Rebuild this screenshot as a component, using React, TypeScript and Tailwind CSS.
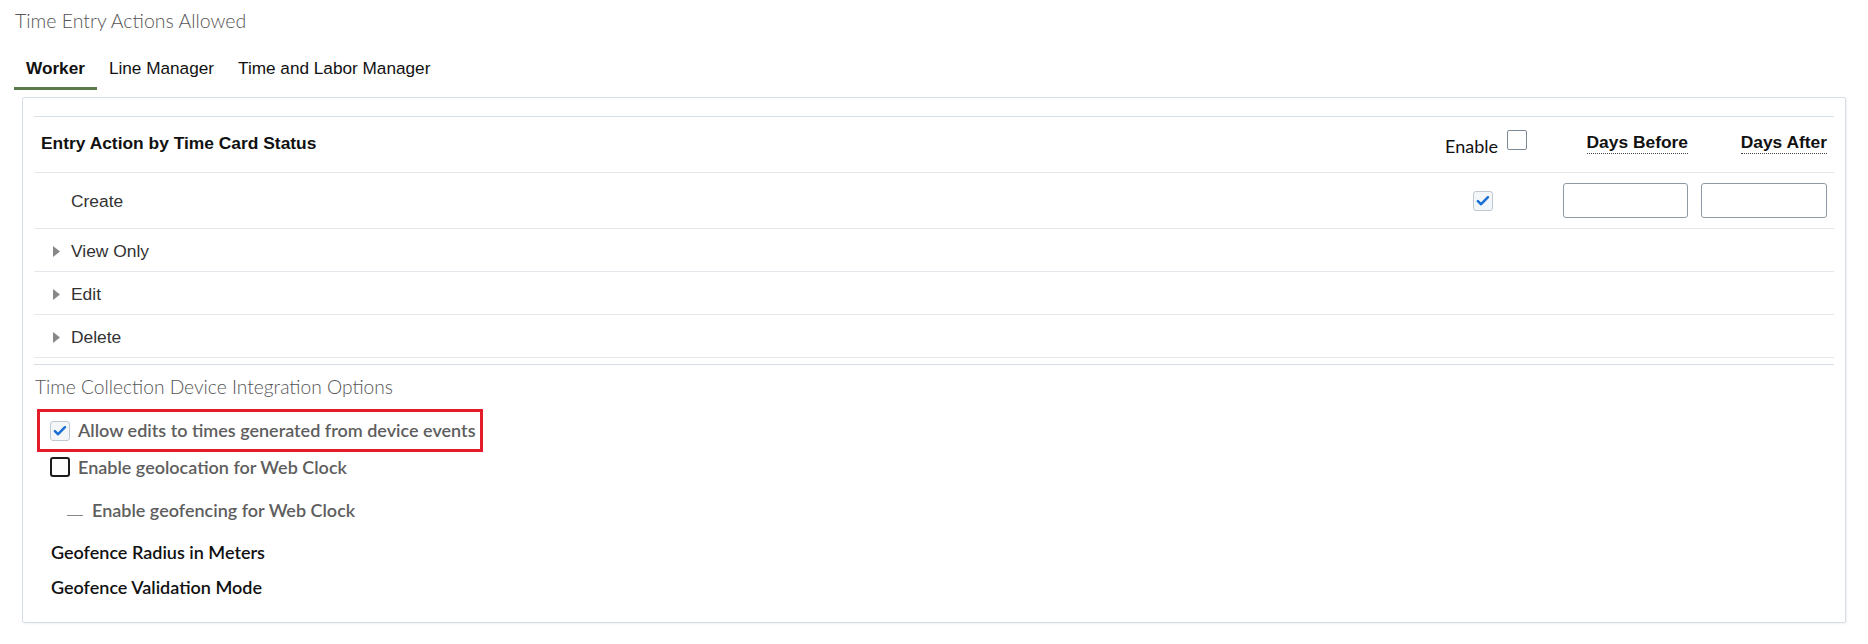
import React from 'react';

const CheckedBox: React.FC = () => (
  <span className="flex h-[20px] w-[20px] shrink-0 items-center justify-center rounded-[3px] border border-[#bfc8d1] bg-[#f4f7fa]">
    <svg viewBox="0 0 20 20" className="h-[20px] w-[20px]">
      <path d="M4.3 10.2l3.6 3.4 7.6-7.8" fill="none" stroke="#1a6fd2" strokeWidth="2.8" strokeLinecap="round" strokeLinejoin="round" />
    </svg>
  </span>
);

const Caret: React.FC = () => (
  <svg viewBox="0 0 7 11" className="h-[11px] w-[7px] shrink-0">
    <path d="M0 0 L7 5.5 L0 11 Z" fill="#888" />
  </svg>
);

const rows = ['View Only', 'Edit', 'Delete'];

export default function App() {
  return (
    <div className="h-[644px] w-[1868px] bg-white font-['Liberation_Sans',Arial,sans-serif] text-[#333]">
      {/* page title */}
      <div className="h-[44px] pl-[15px] pt-[7px] font-['Lato',sans-serif] text-[19.5px] font-light leading-[28px] text-[#555]">
        Time Entry Actions Allowed
      </div>

      {/* tabs */}
      <div className="flex h-[46px] pl-[14px] text-[17.2px] leading-[20px]">
        <div className="flex items-end border-b-[3px] border-[#5b7a4c] px-[12px] pb-[9px] font-bold text-[#111]">Worker</div>
        <div className="flex items-end px-[12px] pb-[12px] text-[#111]">Line Manager</div>
        <div className="flex items-end px-[12px] pb-[12px] text-[#111]">Time and Labor Manager</div>
      </div>

      {/* panel */}
      <div className="ml-[22px] mt-[7px] box-border h-[526px] w-[1824px] rounded-[2px] border border-[#d6dde4] px-[11px] pt-[18px] shadow-[1px_1px_2px_rgba(0,0,0,0.06)]">
        <div className="border-t border-[#d8e0e7]">
          {/* header row */}
          <div className="grid h-[56px] grid-cols-[1fr_138px_139px_140px] border-b border-[#e4e8ec] text-[17.4px] leading-[20px]">
            <div className="flex items-center pb-[3px] pl-[7px] font-bold text-[#111]">Entry Action by Time Card Status</div>
            <div className="flex items-start justify-center gap-[9px] pt-[16px]">
              <span className="pt-[3px] font-['Lato',sans-serif] text-[18px] text-[#111]">Enable</span>
              <span className="mt-[-3px] h-[20px] w-[20px] rounded-[2px] border border-[#7d8b98] bg-white" />
            </div>
            <div className="flex items-center justify-end pb-[3px] pr-[6px]">
              <span className="border-b border-dotted border-[#444] pb-[1px] font-bold text-[#111]">Days Before</span>
            </div>
            <div className="flex items-center justify-end pb-[3px] pr-[7px]">
              <span className="border-b border-dotted border-[#444] pb-[1px] font-bold text-[#111]">Days After</span>
            </div>
          </div>

          {/* create row */}
          <div className="grid h-[56px] grid-cols-[1fr_138px_139px_140px] border-b border-[#e4e8ec] text-[17.4px] leading-[20px]">
            <div className="flex items-center pl-[37px]">Create</div>
            <div className="flex items-center justify-center pr-[6px]">
              <CheckedBox />
            </div>
            <div className="flex items-center pl-[8px]">
              <div className="h-[35px] w-[125px] rounded-[3px] border border-[#8d9aa6] bg-white" />
            </div>
            <div className="flex items-center pl-[7px]">
              <div className="h-[35px] w-[126px] rounded-[3px] border border-[#8d9aa6] bg-white" />
            </div>
          </div>

          {rows.map((r) => (
            <div key={r} className="flex h-[43px] items-center gap-[11px] border-b border-[#e4e8ec] pl-[19px] pt-[2px] text-[17.4px] leading-[20px]">
              <Caret />
              <span>{r}</span>
            </div>
          ))}
        </div>

        {/* device integration section */}
        <div className="mt-[6px] border-t border-[#d6dde4]">
          <div className="mt-[10px] h-[24px] pl-[1px] font-['Lato',sans-serif] text-[19.2px] font-light leading-[24px] text-[#555]">
            Time Collection Device Integration Options
          </div>

          <div className="mt-[10px] ml-[3px] flex h-[43px] w-[446px] items-center gap-[8px] border-[3px] border-[#e31b2a] pl-[10px] font-['Lato',sans-serif] text-[18px] font-semibold text-[#5e5e5e]">
            <CheckedBox />
            <span>Allow edits to times generated from device events</span>
          </div>

          <div className="flex h-[30px] items-center gap-[8px] pl-[16px] font-['Lato',sans-serif] text-[18px] font-semibold leading-[24px] text-[#5e5e5e]">
            <span className="h-[20px] w-[20px] shrink-0 rounded-[3px] border-2 border-[#1b1b1b] bg-white" />
            <span>Enable geolocation for Web Clock</span>
          </div>

          <div className="mt-[16px] flex h-[24px] items-end gap-[9px] pl-[33px] font-['Lato',sans-serif] text-[18px] font-semibold leading-[24px] text-[#5e5e5e]">
            <span className="mb-[6px] h-px w-[16px] shrink-0 bg-[#8a8a8a]" />
            <span className="self-center">Enable geofencing for Web Clock</span>
          </div>

          <div className="mt-[18px] h-[24px] pl-[17px] font-['Lato',sans-serif] text-[18px] font-semibold leading-[24px] text-[#111]">
            Geofence Radius in Meters
          </div>
          <div className="mt-[11px] h-[24px] pl-[17px] font-['Lato',sans-serif] text-[18px] font-semibold leading-[24px] text-[#111]">
            Geofence Validation Mode
          </div>
        </div>
      </div>
    </div>
  );
}
